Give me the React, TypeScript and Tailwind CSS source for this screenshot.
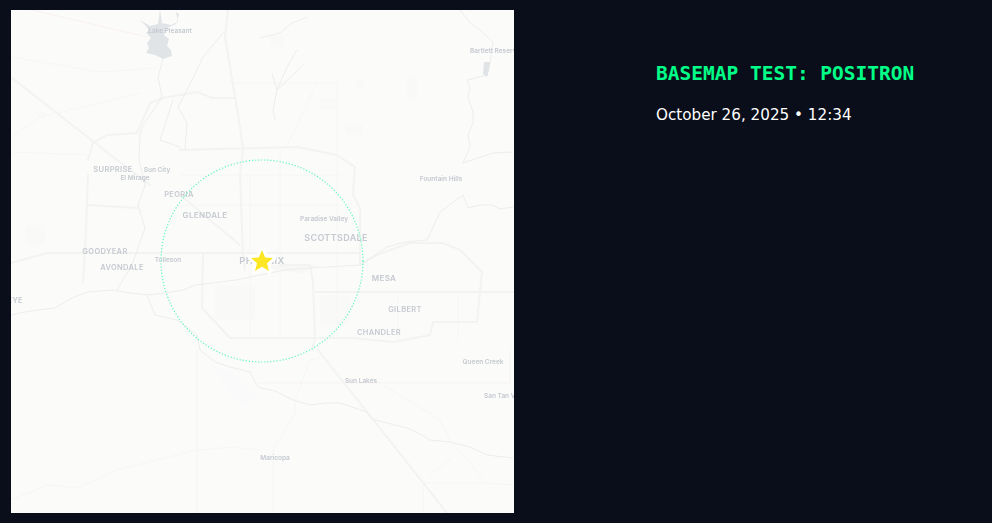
const roads = [
  'M228 10 L225 37 L240 127 L243 150 L240 175 L243 255 L245 270',
  'M88 160 L93 143 L107 135 L137 133 L150 103 L163 98 L197 92 L213 98 L233 98',
  'M12 78 L117 160 L150 185',
  'M180 150 L297 147 L337 155 L355 167 L353 195 L360 208 L360 265',
  'M360 265 L377 255 L410 243 L443 243 L460 250 L482 272 L480 292 L477 322 L433 322 L430 335 L393 342 L353 338 L310 338',
  'M280 265 L310 265 L313 282 L315 338 L312 350',
  'M315 292 L513 292',
  'M318 350 L447 513',
  'M11 263 L47 253 L260 253 L360 253',
  'M88 175 L85 252 L83 282',
  'M88 205 L120 207 L138 208',
  'M203 255 L202 308 L230 338 L310 338',
  'M180 195 L240 245',
];

const thinRoads = [
  'M250 175 L250 340 M280 150 L280 340 M337 150 L337 340 M180 175 L340 175 M180 205 L340 205',
  'M230 83 L337 83 L337 150 M285 150 L317 83',
  'M398 292 L398 340 M458 292 L458 340',
  'M11 57 L100 72 L157 68 M11 152 L90 155 M12 137 L40 117 L100 103 L140 93',
  'M11 500 L48 485 L77 488 L117 470 L197 450 L233 447 L260 450',
  'M273 513 L273 450 L295 413 L295 400 L310 360 L320 358',
  'M380 383 L440 420 L450 440 L487 483 L513 485 M423 513 L423 483 L487 483 M427 477 L453 457',
];

const rivers = [
  'M163 59 L158 77 L162 97 L150 115 L143 125 L140 135 L139 160 L145 185 L138 205 L145 228 L132 265 L117 290',
  'M11 315 L30 311 L55 308 L72 298 L87 292 L113 290 L130 293 L147 295 L165 293 L183 290 L195 285 L213 283 L236 280 L260 275 L285 270 L310 268 L360 265 L387 247 L405 242 L427 240 L434 225 L440 212 L452 203 L463 195 L468 208 L480 205 L493 205 L500 209 L513 207',
  'M147 295 L155 315 L177 320 L197 335 L200 350 L215 362 L230 367 L250 372 L255 382 L260 388 L275 391 L293 400 L310 405 L325 403 L340 403 L355 408 L367 412 L372 419 L387 423 L407 428 L420 434 L430 440 L450 442 L470 447 L487 455 L513 458',
  'M460 10 L470 23 L480 30 L493 42 L490 63 L487 75 L467 80 L470 88 L468 97 L473 112 L473 123 L468 135 L470 147 L463 163 L478 158 L493 153 L513 152',
  'M223 33 L203 57 L192 80 L178 107 L187 123 L185 150',
  'M173 100 L160 140 L180 147',
  'M297 50 L287 67 L277 90 L272 73 M303 65 L277 90 L273 110 L275 120',
  'M307 17 L292 23 L280 33 L260 38',
];

const blotches = [
  { x: 407, y: 77, w: 10, h: 22 },
  { x: 355, y: 80, w: 9, h: 8 },
  { x: 270, y: 35, w: 14, h: 12 },
  { x: 320, y: 98, w: 20, h: 12 },
  { x: 345, y: 125, w: 18, h: 10 },
  { x: 25, y: 225, w: 20, h: 20 },
  { x: 38, y: 112, w: 8, h: 6 },
  { x: 215, y: 285, w: 40, h: 35 },
  { x: 320, y: 295, w: 30, h: 30 },
];

const labels = [
  { text: 'Lake Pleasant', x: 170, y: 33, size: 6.5 },
  { text: 'Bartlett Reservoir', x: 470, y: 53, size: 6.5, anchor: 'start' },
  { text: 'SURPRISE', x: 113, y: 172, size: 7.5, caps: true },
  { text: 'Sun City', x: 157, y: 172, size: 6.5 },
  { text: 'El Mirage', x: 135, y: 180, size: 6.5 },
  { text: 'PEORIA', x: 179, y: 197, size: 7.5, caps: true },
  { text: 'GLENDALE', x: 205, y: 218, size: 8, caps: true },
  { text: 'GOODYEAR', x: 105, y: 254, size: 7.5, caps: true },
  { text: 'AVONDALE', x: 122, y: 270, size: 7.5, caps: true },
  { text: 'Tolleson', x: 168, y: 262, size: 6.5 },
  { text: 'PHOENIX', x: 262, y: 264, size: 9.5, caps: true },
  { text: 'Paradise Valley', x: 324, y: 221, size: 6.5 },
  { text: 'SCOTTSDALE', x: 336, y: 241, size: 9, caps: true },
  { text: 'MESA', x: 384, y: 281, size: 8, caps: true },
  { text: 'GILBERT', x: 405, y: 312, size: 7.5, caps: true },
  { text: 'CHANDLER', x: 379, y: 335, size: 7.5, caps: true },
  { text: 'Fountain Hills', x: 441, y: 181, size: 6.5 },
  { text: 'Queen Creek', x: 483, y: 364, size: 6.5 },
  { text: 'Sun Lakes', x: 361, y: 383, size: 6.5 },
  { text: 'San Tan Valley', x: 484, y: 398, size: 6.5, anchor: 'start' },
  { text: 'Maricopa', x: 275, y: 460, size: 6.5 },
  { text: 'BUCKEYE', x: 23, y: 303, size: 7.5, anchor: 'end', caps: true },
];

function BaseMap() {
  return (
    <svg viewBox="11 10 503 503" className="block h-[503px] w-[503px] shrink-0 bg-[#fbfbfa]">
      <g fill="none" strokeLinejoin="round" strokeLinecap="round" className="blur-[0.6px]">
        {blotches.map((b) => (
          <rect key={b.x} x={b.x} y={b.y} width={b.w} height={b.h} rx="2" fill="#f9f9f8" />
        ))}
        <path d="M213 367 L232 372 L257 395 L245 407 L232 397 Z" fill="#f9faf9" />
        <path d="M255 265 L320 265 L300 274 L280 270 Z" fill="#f7f7f6" />
        {thinRoads.map((d) => (
          <path key={d} d={d} stroke="#f6f6f5" strokeWidth="1" />
        ))}
        {roads.map((d) => (
          <path key={d} d={d} stroke="#f3f3f2" strokeWidth="2" />
        ))}
        {rivers.map((d) => (
          <path key={d} d={d} stroke="#ebedee" strokeWidth="1" />
        ))}
        <path d="M32 10 L147 37" stroke="#f8efef" strokeDasharray="1 1" />
        <path d="M197 350 L197 513 M260 383 L510 383 M510 350 L510 383" stroke="#f8f1f1" strokeDasharray="1 1" />
        <path
          d="M140 20 L145 25 L149 30 L146 33 L151 38 L147 43 L149 48 L146 53 L155 55 L163 59 L172 56 L171 50 L167 46 L169 39 L164 35 L167 28 L176 24 L179 14 L176 12 L178 22 L171 25 L162 23 L160 10 L158 24 L150 26 Z"
          fill="#e1e4e6"
        />
        <path d="M484 62 L490 62 L489 70 L487 77 L483 74 Z" fill="#e0e4e7" />
      </g>
      <g fill="#c5c9d0" fontFamily="Inter, 'Liberation Sans', sans-serif" fontWeight="600" className="blur-[0.3px]">
        {labels.map((l) => (
          <text
            key={l.text}
            x={l.x}
            y={l.y}
            fontSize={l.size}
            letterSpacing={l.caps ? 0.35 : 0}
            textAnchor={l.anchor ?? 'middle'}
          >
            {l.text}
          </text>
        ))}
      </g>
      <circle cx="262" cy="261" r="101" fill="none" stroke="#5ef5b8" strokeWidth="1.2" strokeDasharray="1.2 1.9" />
      <path
        d="M262 250 L265.2 257.6 L273 258 L267 263.2 L269 271 L262 266.8 L255 271 L257 263.2 L251 258 L258.8 257.6 Z"
        fill="#fde725"
        stroke="#ffffff"
        strokeWidth="6"
        strokeLinejoin="round"
        paintOrder="stroke"
      />
    </svg>
  );
}

export default function App() {
  return (
    <div className="flex h-[523px] w-[992px] overflow-hidden bg-[#0a0e1a] pl-[11px] pt-[10px]">
      <BaseMap />
      <div className="ml-[142px] pt-[52px]">
        <h1 className="font-['DejaVu_Sans_Mono',monospace] text-[19.5px] leading-[24px] font-bold text-[#00ff88]">
          BASEMAP TEST: POSITRON
        </h1>
        <p className="mt-[20px] font-['DejaVu_Sans',sans-serif] text-[15.2px] leading-[18px] text-white">
          October 26, 2025 • 12:34
        </p>
      </div>
    </div>
  );
}
